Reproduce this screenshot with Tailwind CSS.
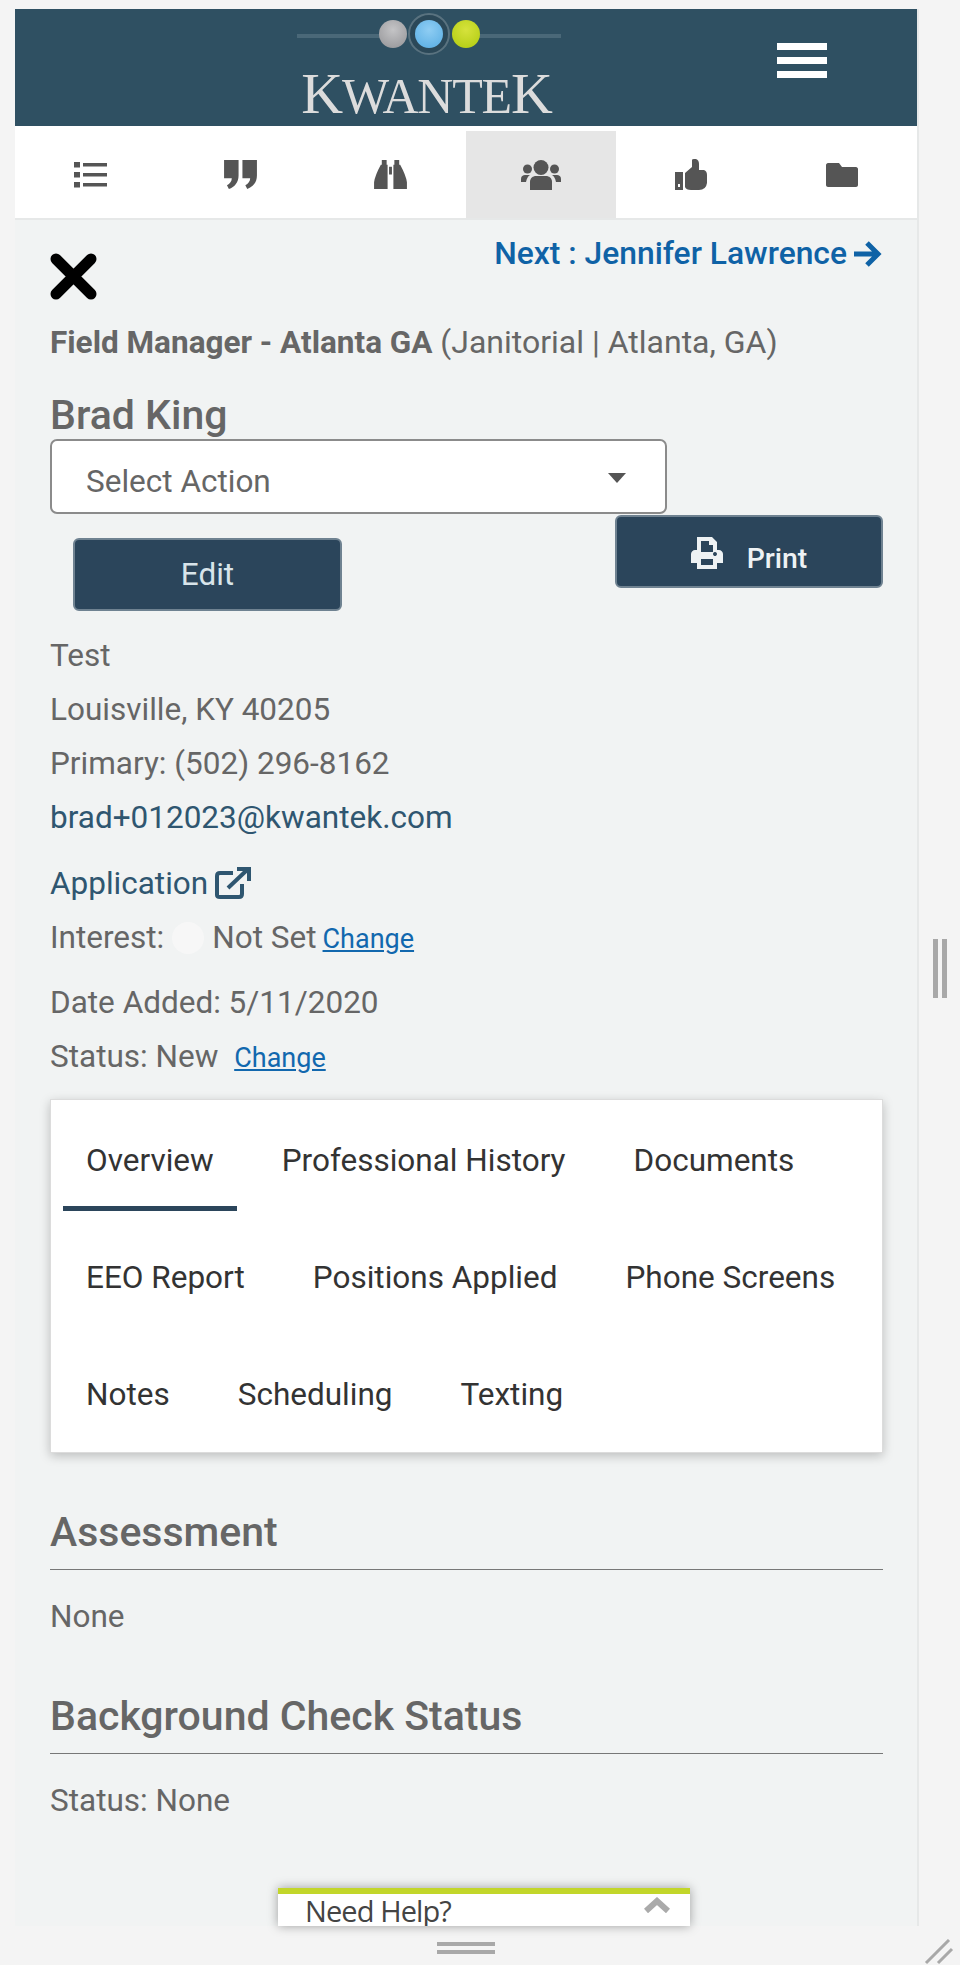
<!DOCTYPE html>
<html lang="en">
<head>
    <meta charset="UTF-8">
    <meta name="viewport" content="width=device-width, initial-scale=1.0">
    <title>Kwantek - Brad King</title>
    <script src="https://cdn.jsdelivr.net/npm/@tailwindcss/browser@4"></script>
</head>
<body class="relative w-[960px] h-[1965px] overflow-hidden bg-[#f4f4f4] font-['Roboto',sans-serif] text-[31.5px] text-[#666]">
    <div class="ml-[15px] pt-[9px] w-[904px]">
        <div class="relative h-[1917px] w-[904px] bg-[#f1f3f3] border-r-2 border-[#e6e8e8]">
            <!-- header -->
            <header class="relative h-[117px] bg-[#2f5062]">
                <div class="pl-[282px]">
                    <div class="flex flex-col items-center w-[264px]">
                        <svg width="264" height="56" viewBox="0 0 264 56">
                            <defs>
                                <radialGradient id="g1" cx="50%" cy="35%" r="65%"><stop offset="0" stop-color="#c4c4c6"/><stop offset="1" stop-color="#9d9da0"/></radialGradient>
                                <radialGradient id="g2" cx="50%" cy="35%" r="65%"><stop offset="0" stop-color="#8fcdf3"/><stop offset="1" stop-color="#62b3e6"/></radialGradient>
                                <radialGradient id="g3" cx="50%" cy="35%" r="65%"><stop offset="0" stop-color="#d6e23c"/><stop offset="1" stop-color="#b7cf18"/></radialGradient>
                            </defs>
                            <rect x="0" y="25" width="90" height="4" fill="#4a6878"/>
                            <rect x="170" y="25" width="94" height="4" fill="#4a6878"/>
                            <circle cx="132" cy="25" r="20" fill="#2b4858" stroke="#59727f" stroke-width="2"/>
                            <circle cx="96" cy="25" r="14" fill="url(#g1)"/>
                            <circle cx="132" cy="25" r="14" fill="url(#g2)"/>
                            <circle cx="169" cy="25" r="14" fill="url(#g3)"/>
                        </svg>
                        <div class="mt-[1px] mr-[5px] h-[56px] leading-[56px] whitespace-nowrap font-['Liberation_Serif',serif] text-[#dcdcdc] tracking-[-1.2px] text-[50px]"><span class="text-[58px]">K</span>WANTE<span class="text-[58px]">K</span></div>
                    </div>
                </div>
                <div class="absolute left-[762px] top-[34px] flex flex-col gap-[7px] w-[50px]">
                    <span class="block h-[7px] bg-white"></span>
                    <span class="block h-[7px] bg-white"></span>
                    <span class="block h-[7px] bg-white"></span>
                </div>
            </header>

            <!-- icon nav -->
            <nav class="grid grid-cols-6 h-[94px] pt-[5px] bg-white border-b-2 border-[#e6e8e8] text-[#555]">
                <a class="flex items-center justify-center">
                    <svg width="33" height="26" viewBox="0 0 33 26" fill="currentColor"><rect x="0" y="0" width="6" height="5.5"/><rect x="0" y="10" width="6" height="5.5"/><rect x="0" y="20" width="6" height="5.5"/><rect x="9" y="1" width="24" height="3.5"/><rect x="9" y="11" width="24" height="3.5"/><rect x="9" y="21" width="24" height="3.5"/></svg>
                </a>
                <a class="flex items-center justify-center">
                    <svg width="33" height="29" viewBox="0 0 34 30" fill="currentColor"><path d="M0 0h15v16c0 7-4 12-10 14l-2-4c3-1 5-4 5-7H0z"/><path d="M19 0h15v16c0 7-4 12-10 14l-2-4c3-1 5-4 5-7h-8z"/></svg>
                </a>
                <a class="flex items-center justify-center">
                    <svg width="33" height="29" viewBox="0 0 34 30" fill="currentColor"><path d="M8 0h5v5h1v25H0v-7q1-7 7-18h1z"/><path d="M21 0h5v5h1q6 11 7 18v7H20V5h1z"/><rect x="15.5" y="7" width="3" height="8"/></svg>
                </a>
                <a class="flex items-center justify-center bg-[#e6e6e6]">
                    <svg width="40" height="30" viewBox="0 0 40 30" fill="currentColor"><circle cx="20" cy="7.5" r="7.5"/><circle cx="6.5" cy="9" r="4.5"/><circle cx="33.5" cy="9" r="4.5"/><path d="M9 30v-8c0-4 3-6 6-6h10c3 0 6 2 6 6v8z"/><path d="M0 22v-3c0-3 2-4 4-4h5c-2 1-3 3-4 7z"/><path d="M40 22v-3c0-3-2-4-4-4h-5c2 1 3 3 4 7z"/></svg>
                </a>
                <a class="flex items-center justify-center">
                    <svg width="32" height="31" viewBox="0 0 32 31" fill="currentColor"><path fill-rule="evenodd" d="M0 13h8v18H0zM3 25v3h2v-3z"/><path d="M10 14L17 8V1Q17 0 19 0H21Q24 1 24 5V11H29Q32 12 32 16V24Q31 31 24 31H16Q11 31 10 28Z"/></svg>
                </a>
                <a class="flex items-center justify-center">
                    <svg width="32" height="24" viewBox="0 0 32 24" fill="currentColor"><path d="M2 0h11l3 4h14c1 0 2 1 2 2v16c0 1-1 2-2 2H2c-1 0-2-1-2-2V2C0 1 1 0 2 0z"/></svg>
                </a>
            </nav>

            <!-- candidate -->
            <main class="px-[35px]">
                <div class="flex justify-between items-start">
                    <svg class="mt-[33px]" width="47" height="47" viewBox="0 0 47 47" fill="none" stroke="#000" stroke-width="11" stroke-linecap="round"><path d="M6 6l35 35M41 6L6 41"/></svg>
                    <a class="flex items-center gap-[7px] mt-[16px] h-[36px] font-medium text-[31.8px] text-[#0f62a6] whitespace-nowrap">Next : Jennifer Lawrence
                        <svg width="28" height="26" viewBox="0 0 28 26" fill="none" stroke="currentColor" stroke-width="5"><path d="M0 13h24M13 2l11 11-11 11"/></svg>
                    </a>
                </div>
                <p class="mt-[22px] h-[40px] leading-[40px] whitespace-nowrap"><span class="font-bold">Field Manager - Atlanta GA</span> <span class="text-[32px]">(Janitorial | Atlanta, GA)</span></p>
                <h2 class="mt-[33px] h-[40px] leading-[40px] text-[41px] font-medium">Brad King</h2>
                <div class="mt-[4px] flex items-center justify-between w-[617px] h-[75px] pl-[34px] pr-[39px] bg-white border-2 border-[#8b8b8b] rounded-[7px]">
                    <span class="pt-[10px]">Select Action</span>
                    <span class="mt-[3px] block w-0 h-0 border-x-[9px] border-t-[10px] border-x-transparent border-t-[#555]"></span>
                </div>
                <div class="flex justify-between items-start w-[833px]">
                    <button class="ml-[23px] mt-[24px] w-[269px] h-[73px] rounded-[6px] bg-[#2b455b] border-2 border-[#6f8291] text-[#d8e4ea]">Edit</button>
                    <button class="mt-[1px] flex items-center justify-center gap-[24px] w-[268px] h-[73px] rounded-[6px] bg-[#2b455b] border-2 border-[#6f8291] text-[#eef2f4] text-[28.4px] font-medium">
                        <svg class="mt-[2px]" width="32" height="32" viewBox="0 0 32 32" fill="currentColor"><path fill-rule="evenodd" d="M6 0h15l5 5v8h2c2 0 4 2 4 4v9h-6v6H6v-6H0v-9c0-2 2-4 4-4h2zM10 4v11h12V8h-4V4zM10 22v6h12v-6zM26 17a2 2 0 1 0 0 .1z"/></svg>
                        <span class="pt-[15px]">Print</span>
                    </button>
                </div>

                <div class="mt-[18px] leading-[54px]">
                    <p>Test</p>
                    <p>Louisville, KY 40205</p>
                    <p>Primary: (502) 296-8162</p>
                    <p class="text-[#2f5670]">brad+012023@kwantek.com</p>
                </div>
                <a class="mt-[12px] flex items-center gap-[7px] h-[54px] text-[#2f5670]">Application
                    <svg class="mb-[3px]" width="36" height="32" viewBox="0 0 36 32" fill="none" stroke="currentColor" stroke-width="4"><path d="M18 6H5C3 6 2 7 2 9v19c0 1 1 2 3 2h19c2 0 3-1 3-3V17"/><path d="M13 21L32 3"/><path d="M22 2h12v12" /></svg>
                </a>
                <div class="flex items-center h-[54px] whitespace-nowrap">Interest:
                    <span class="ml-[8px] mr-[8px] block w-[32px] h-[32px] rounded-full bg-[#f7f7f7]"></span>
                    Not Set
                    <a class="ml-[6px] mt-[2px] text-[27px] underline text-[#1268ae]">Change</a>
                </div>
                <p class="mt-[11px] leading-[54px]">Date Added: 5/11/2020</p>
                <p class="leading-[54px] whitespace-nowrap">Status: New <a class="ml-[8px] text-[27px] underline text-[#1268ae]">Change</a></p>

                <!-- tabs card -->
                <section class="mt-[14px] w-[833px] h-[354px] px-[12px] pt-[1px] bg-white border border-[#dcdcdc] shadow-[0_3px_10px_rgba(0,0,0,0.22)] text-[#333] text-[31.5px]">
                    <div class="flex gap-[22px] h-[117px]">
                        <a class="px-[23px] h-[110px] leading-[120px] border-b-[5px] border-[#2b455b]">Overview</a>
                        <a class="px-[23px] leading-[120px]">Professional History</a>
                        <a class="px-[23px] leading-[120px]">Documents</a>
                    </div>
                    <div class="flex gap-[22px] h-[117px]">
                        <a class="px-[23px] leading-[119px]">EEO Report</a>
                        <a class="px-[23px] leading-[119px]">Positions Applied</a>
                        <a class="px-[23px] leading-[119px]">Phone Screens</a>
                    </div>
                    <div class="flex gap-[22px] h-[117px]">
                        <a class="px-[23px] leading-[119px]">Notes</a>
                        <a class="px-[23px] leading-[119px]">Scheduling</a>
                        <a class="px-[23px] leading-[119px]">Texting</a>
                    </div>
                </section>

                <h3 class="mt-[57px] h-[44px] leading-[44px] text-[41px] font-medium">Assessment</h3>
                <hr class="mt-[15px] border-[#777] w-[833px]">
                <p class="mt-[20px] leading-[54px]">None</p>
                <h3 class="mt-[50px] h-[44px] leading-[44px] text-[41px] font-medium">Background Check Status</h3>
                <hr class="mt-[15px] border-[#777] w-[833px]">
                <p class="mt-[20px] leading-[54px]">Status: None</p>
            </main>

            <!-- help widget -->
            <div class="absolute left-[263px] bottom-0 w-[412px] h-[38px] bg-white shadow-[0_0_10px_rgba(0,0,0,0.35)] border-t-[6px] border-[#c2d62a] overflow-hidden">
                <div class="flex justify-between pl-[27px] pr-[20px]">
                    <span class="text-[29px] leading-[33px] text-[#444] font-['Open_Sans',sans-serif] tracking-[-0.9px]">Need Help?</span>
                    <svg class="mt-[3px]" width="26" height="16" viewBox="0 0 26 16" fill="none" stroke="#aaa" stroke-width="6"><path d="M2 14L13 4l11 10"/></svg>
                </div>
            </div>
        </div>
    </div>

    <!-- pane handles -->
    <div class="absolute left-[933px] top-[939px] flex gap-[4px] h-[59px]">
        <span class="block w-[5px] bg-[#a8a8a8]"></span>
        <span class="block w-[5px] bg-[#a8a8a8]"></span>
    </div>
    <div class="absolute left-[437px] top-[1942px] flex flex-col gap-[4px] w-[58px]">
        <span class="block h-[4px] bg-[#a8a8a8]"></span>
        <span class="block h-[4px] bg-[#a8a8a8]"></span>
    </div>
    <svg class="absolute left-[924px] top-[1939px]" width="30" height="26" viewBox="0 0 30 26" fill="none" stroke="#a8a8a8" stroke-width="3"><path d="M2 24L25 1M14 24L28 10"/></svg>
</body>
</html>
